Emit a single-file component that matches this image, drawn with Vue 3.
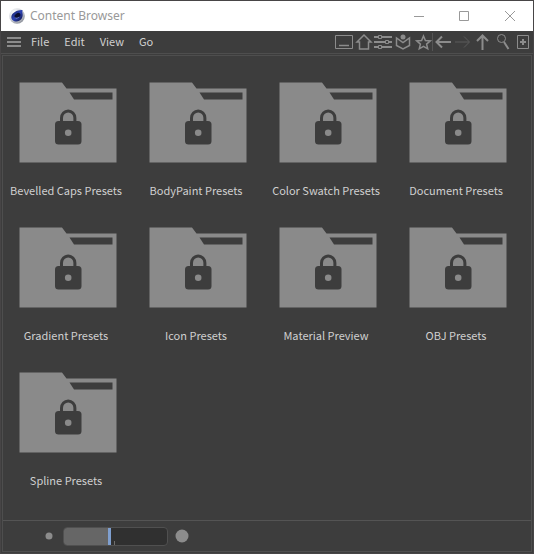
<script setup>
import { ref, computed } from 'vue'

const menus = ['File', 'Edit', 'View', 'Go']
const presets = [
  'Bevelled Caps Presets',
  'BodyPaint Presets',
  'Color Swatch Presets',
  'Document Presets',
  'Gradient Presets',
  'Icon Presets',
  'Material Preview',
  'OBJ Presets',
  'Spline Presets',
]
const size = ref(44)
const fill = computed(() => size.value + '%')
</script>

<template>
  <div class="window">
    <header class="titlebar">
      <svg class="logo" viewBox="0 0 16 16" aria-hidden="true">
        <defs>
          <radialGradient id="rim" cx="0.35" cy="0.3" r="0.75">
            <stop offset="0" stop-color="#ffffff" />
            <stop offset="0.6" stop-color="#d3d6dc" />
            <stop offset="1" stop-color="#8b8f99" />
          </radialGradient>
          <linearGradient id="ball" x1="0" y1="0" x2="1" y2="1">
            <stop offset="0" stop-color="#141c58" />
            <stop offset="0.5" stop-color="#2d42b4" />
            <stop offset="1" stop-color="#0b0f3a" />
          </linearGradient>
        </defs>
        <circle cx="8" cy="8" r="7.8" fill="url(#rim)" />
        <path d="M13.500 2C9 1.600 2.600 4.400 2.300 9c0 3.100 2.600 4.700 5.300 4.500 4-.3 6.300-3.400 6.100-6.900-.1-1.700-.7-3.300-.2-4.600z" fill="url(#ball)" />
        <ellipse cx="8.500" cy="7.500" rx="3.200" ry="2.200" transform="rotate(-35 8.500 7.500)" fill="#0a0d30" />
        <path d="M6 9.200c1 1 3 .8 4.300-.8-.5 2-3.600 2.900-4.300.8z" fill="#8fa3ea" />
      </svg>
      <h1 class="title">Content Browser</h1>
      <div class="controls">
        <button type="button" aria-label="Minimize">
          <svg viewBox="0 0 12 12"><path d="M2 6.500h10" /></svg>
        </button>
        <button type="button" aria-label="Maximize">
          <svg viewBox="0 0 12 12"><path d="M1.500 1.500h9v9h-9z" /></svg>
        </button>
        <button type="button" aria-label="Close">
          <svg viewBox="0 0 12 12"><path d="M1 1l10 10M11 1L1 11" /></svg>
        </button>
      </div>
    </header>

    <div class="menubar">
      <button type="button" class="burger" aria-label="Panel menu">
        <svg viewBox="0 0 14 12"><path d="M0 2h14M0 6h14M0 10h14" /></svg>
      </button>
      <nav class="menus">
        <button v-for="menu in menus" :key="menu" type="button">{{ menu }}</button>
      </nav>
      <div class="tools">
        <button type="button" aria-label="Show panel">
          <svg viewBox="0 0 20 18"><path d="M2.500 2.500h17v13h-17z" /><path class="medium" d="M6 12.500h10" /></svg>
        </button>
        <button type="button" aria-label="Home">
          <svg viewBox="0 0 20 18"><path class="medium" d="M11 2L4 9h2.500v7h9V9H18z" /></svg>
        </button>
        <button type="button" aria-label="Filters">
          <svg viewBox="0 0 20 18">
            <path class="thick" d="M1 4h18M1 9h18M1 14h18" />
            <path class="knob" d="M5.500 2.500h3v3h-3zM12.500 7.500h3v3h-3zM5.500 12.500h3v3h-3z" />
          </svg>
        </button>
        <button type="button" aria-label="Catalog">
          <svg viewBox="0 0 20 18">
            <path class="medium" d="M3.500 5v7.500L10 16l6.500-3.500V5L10 9.500z" />
            <circle class="solid" cx="10" cy="4" r="2.500" />
          </svg>
        </button>
        <button type="button" aria-label="Favorites">
          <svg viewBox="0 0 20 18"><path class="medium" d="M10.500 3l1.900 4.500 4.900.4-3.700 3.200 1.100 4.700-4.200-2.500-4.200 2.500 1.100-4.700-3.700-3.200 4.900-.4z" /></svg>
        </button>
        <span class="divider"></span>
        <button type="button" aria-label="Back">
          <svg viewBox="0 0 20 18"><path class="arrow" d="M18 9H4M9 3.500L3.500 9 9 14.500" /></svg>
        </button>
        <button type="button" aria-label="Forward" disabled>
          <svg viewBox="0 0 20 18"><path d="M2 9h14M11 3.500L16.500 9 11 14.500" /></svg>
        </button>
        <button type="button" aria-label="Up one level">
          <svg viewBox="0 0 20 18"><path class="arrow" d="M9.500 17V3M4 8l5.500-5.500L15 8" /></svg>
        </button>
        <button type="button" aria-label="Search">
          <svg viewBox="0 0 20 18">
            <circle cx="8.500" cy="5.500" r="4" />
            <path class="arrow" d="M11 9l4.500 7" />
          </svg>
        </button>
        <button type="button" aria-label="New panel">
          <svg viewBox="0 0 20 18">
            <path d="M4.500 2.500h11v13h-11z" />
            <path class="arrow" d="M7 9h6M10 6v6" />
          </svg>
        </button>
      </div>
    </div>

    <main class="panel">
      <ul class="grid">
        <li v-for="name in presets" :key="name" class="item">
          <svg class="folder" viewBox="0 0 98 81" aria-hidden="true">
            <path class="shape" d="M.5.500H43L47.500 6.500H97.500V80.500H.5z" />
            <path class="cut" d="M50.500 10.500H93.500V17.500H55z" />
            <path class="shackle" d="M42.500 40v-4a6.700 7 0 0 1 13.400 0v4" />
            <rect class="cut" x="36" y="39" width="26.500" height="23.500" rx="3.500" />
            <circle class="hole" cx="49.200" cy="50.700" r="3.300" />
          </svg>
          <span class="label">{{ name }}</span>
        </li>
      </ul>
      <footer class="zoombar">
        <svg class="dot" viewBox="0 0 14 14" aria-hidden="true"><circle cx="7" cy="7" r="3.500" /></svg>
        <div class="slider">
          <span class="fill" :style="{ width: fill }"></span>
          <span class="tick"></span>
          <input v-model="size" type="range" min="0" max="100" aria-label="Icon size" />
        </div>
        <svg class="dot" viewBox="0 0 14 14" aria-hidden="true"><circle cx="7" cy="7" r="6.500" /></svg>
      </footer>
    </main>
  </div>
</template>

<style>
body {
  margin: 0;
  background: #3d3d3d;
}
</style>

<style scoped>
.window {
  box-sizing: border-box;
  min-height: 100vh;
  display: flex;
  flex-direction: column;
  border: 1px solid #474546;
  background: #3d3d3d;
  color: #d0d0d0;
  font: 11px/18px "Noto Sans CJK SC", "Noto Sans", sans-serif;
}
button {
  margin: 0;
  padding: 0;
  border: 0;
  background: none;
  color: inherit;
  font: inherit;
}
svg {
  display: block;
  flex: none;
}
.titlebar {
  display: flex;
  align-items: center;
  height: 30px;
  padding-left: 8px;
  background: #fff;
  color: #999;
}
.logo {
  width: 16px;
  height: 16px;
}
.title {
  margin: 0 0 0 5px;
  font: 12px/20px "Noto Sans", sans-serif;
}
.controls {
  display: flex;
  margin-left: auto;
}
.controls button {
  display: grid;
  place-items: center;
  width: 46px;
  height: 30px;
}
.controls svg {
  width: 12px;
  height: 12px;
  fill: none;
  stroke: #999;
}
.menubar {
  display: flex;
  align-items: center;
  height: 22px;
  padding-left: 6px;
  border-bottom: 1px solid #4e4e4e;
}
.burger svg {
  width: 14px;
  height: 12px;
  stroke: #8c8c8c;
  stroke-width: 2;
}
.menus {
  display: flex;
  gap: 15px;
  margin-left: 10px;
  padding-bottom: 3px;
}
.tools {
  display: flex;
  align-items: center;
  margin-left: auto;
}
.tools svg {
  width: 20px;
  height: 18px;
  fill: none;
  stroke: #8c8c8c;
}
.tools button:disabled svg {
  stroke: #5c5c5c;
}
.tools .thick,
.tools .arrow {
  stroke-width: 2;
}
.tools .medium {
  stroke-width: 1.5;
}
.tools .knob {
  fill: #3d3d3d;
}
.tools .solid {
  fill: #8c8c8c;
  stroke: none;
}
.divider {
  width: 1px;
  height: 18px;
  margin-left: -1px;
  background: #545454;
}
.panel {
  flex: 1;
  display: flex;
  flex-direction: column;
  margin: 1px;
  border: 1px solid #4e4e4e;
}
.grid {
  flex: 1;
  display: grid;
  grid-template-columns: repeat(auto-fill, 130px);
  grid-auto-rows: 145px;
  align-content: start;
  margin: 0;
  padding: 0;
  list-style: none;
}
.item {
  display: flex;
  flex-direction: column;
  align-items: center;
  padding-top: 26px;
}
.folder {
  width: 98px;
  height: 81px;
}
.shape,
.hole {
  fill: #8a8a8a;
}
.cut {
  fill: #3d3d3d;
}
.shackle {
  fill: none;
  stroke: #3d3d3d;
  stroke-width: 3;
}
.label {
  margin-top: 18px;
  padding-right: 4px;
  white-space: nowrap;
}
.zoombar {
  display: flex;
  align-items: center;
  gap: 7px;
  height: 30px;
  padding-left: 39px;
  border-top: 1px solid #545454;
}
.dot {
  width: 14px;
  height: 14px;
  fill: #8c8c8c;
}
.slider {
  position: relative;
  box-sizing: border-box;
  width: 105px;
  height: 19px;
  border: 1px solid #505050;
  border-radius: 4px;
  background: #303030;
  overflow: hidden;
}
.fill {
  display: block;
  height: 100%;
  background: #666;
}
.tick {
  position: absolute;
  left: 49%;
  bottom: 0;
  width: 1px;
  height: 4px;
  background: #6e6e6e;
}
.slider input {
  position: absolute;
  inset: 0;
  width: 100%;
  height: 100%;
  margin: 0;
  appearance: none;
  background: none;
}
.slider input::-webkit-slider-thumb {
  appearance: none;
  width: 3px;
  height: 17px;
  background: #7f9fcf;
}
</style>
